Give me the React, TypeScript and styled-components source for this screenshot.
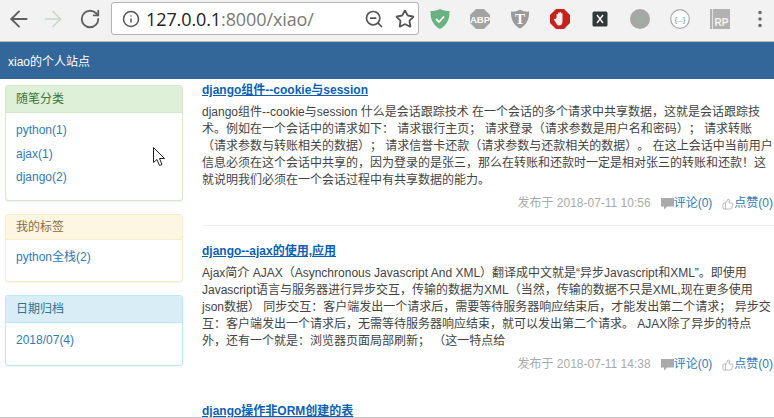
import React from "react";
import styled, { createGlobalStyle } from "styled-components";
import { ArrowLeft, ArrowRight, RotateCw, Info, ZoomOut, Star, ThumbsUp } from "lucide-react";

const GlobalStyle = createGlobalStyle`
  html, body { margin: 0; padding: 0; background: #fff; }
  body {
    font-family: "Liberation Sans", "Noto Sans CJK SC", sans-serif;
    font-size: 12px;
    color: #333;
    text-spacing-trim: space-all;
  }
`;

const panels = [
  { tone: "success", title: "随笔分类", links: ["python(1)", "ajax(1)", "django(2)"] },
  { tone: "warning", title: "我的标签", links: ["python全栈(2)"] },
  { tone: "info", title: "日期归档", links: ["2018/07(4)"] },
] as const;

const tones = {
  success: { bg: "#dff0d8", border: "#d6e9c6", text: "#3c763d", head: 26, pad: 10 },
  warning: { bg: "#fdf6e3", border: "#faebcc", text: "#8a6d3b", head: 24, pad: 12 },
  info: { bg: "#d9edf7", border: "#bce8f1", text: "#31708f", head: 26, pad: 12 },
};

const articles = [
  {
    title: "django组件--cookie与session",
    lines: [
      "django组件--cookie与session 什么是会话跟踪技术 在一个会话的多个请求中共享数据，这就是会话跟踪技",
      "术。例如在一个会话中的请求如下： 请求银行主页； 请求登录（请求参数是用户名和密码）； 请求转账",
      "（请求参数与转账相关的数据）； 请求信誉卡还款（请求参数与还款相关的数据）。 在这上会话中当前用户",
      "信息必须在这个会话中共享的，因为登录的是张三，那么在转账和还款时一定是相对张三的转账和还款！这",
      "就说明我们必须在一个会话过程中有共享数据的能力。",
    ],
    date: "2018-07-11 10:56",
    divided: true,
  },
  {
    title: "django--ajax的使用,应用",
    lines: [
      "Ajax简介 AJAX（Asynchronous Javascript And XML）翻译成中文就是“异步Javascript和XML”。即使用",
      "Javascript语言与服务器进行异步交互，传输的数据为XML（当然，传输的数据不只是XML,现在更多使用",
      "json数据） 同步交互：客户端发出一个请求后，需要等待服务器响应结束后，才能发出第二个请求； 异步交",
      "互：客户端发出一个请求后，无需等待服务器响应结束，就可以发出第二个请求。 AJAX除了异步的特点",
      "外，还有一个就是：浏览器页面局部刷新； （这一特点给",
    ],
    date: "2018-07-11 14:38",
    divided: false,
  },
];

const Page = styled.div`
  position: relative;
  height: 418px;
  box-sizing: border-box;
  overflow: hidden;
  border-bottom: 1px solid #c8c8c8;
  display: flex;
  flex-direction: column;
`;

const Toolbar = styled.div`
  height: 41px;
  flex: none;
  display: flex;
  align-items: center;
  background: #f2f2f2;
  border-bottom: 1px solid #b9b9b9;
`;

const NavIcons = styled.div`
  width: 111px;
  flex: none;
  display: flex;
  align-items: center;
  gap: 8px;
  padding-left: 6px;
  box-sizing: border-box;
  margin-top: -3px;
`;

const Reload = styled(RotateCw)`
  margin-left: 5px;
`;

const AddressBar = styled.div`
  width: 308px;
  height: 33px;
  flex: none;
  box-sizing: border-box;
  margin-top: -4px;
  background: #fff;
  border: 1px solid #b4b4b4;
  border-radius: 3px;
  display: flex;
  align-items: center;
  padding: 0 3px 0 10px;
  gap: 6px;
`;

const Url = styled.div`
  flex: 1;
  font-family: "Open Sans", sans-serif;
  font-size: 18px;
  color: #7a7a7a;
  white-space: nowrap;
  letter-spacing: -0.1px;
  & b { font-weight: 400; color: #222; }
`;

const FavStar = styled(Star)`
  margin-left: 5px;
`;

const Extensions = styled.div`
  flex: 1;
  display: flex;
  align-items: center;
  padding-left: 11px;
  gap: 20px;
  margin-top: -4px;
`;

const Ext = styled.svg`
  width: 20px;
  height: 20px;
  flex: none;
  display: block;
`;

const Navbar = styled.div`
  height: 37px;
  flex: none;
  background: #336699;
  color: #fff;
  display: flex;
  align-items: center;
  padding-left: 8px;
`;

const Content = styled.div`
  flex: 1;
  display: flex;
  gap: 19px;
  padding-left: 5px;
  min-height: 0;
`;

const Sidebar = styled.aside`
  width: 178px;
  flex: none;
  padding-top: 6px;
  display: flex;
  flex-direction: column;
  gap: 13px;
`;

const Panel = styled.div<{ $tone: keyof typeof tones }>`
  border: 1px solid ${(p) => tones[p.$tone].border};
  border-radius: 3px;
  box-shadow: 0 1px 1px rgba(0, 0, 0, 0.05);
  overflow: hidden;
  background: #fff;
`;

const PanelHeading = styled.div<{ $tone: keyof typeof tones }>`
  height: ${(p) => tones[p.$tone].head}px;
  line-height: ${(p) => tones[p.$tone].head}px;
  padding-left: 10px;
  background: ${(p) => tones[p.$tone].bg};
  color: ${(p) => tones[p.$tone].text};
  border-bottom: 1px solid ${(p) => tones[p.$tone].border};
`;

const PanelBody = styled.div<{ $tone: keyof typeof tones }>`
  padding: 6px 10px ${(p) => tones[p.$tone].pad}px;
`;

const PanelLink = styled.a`
  display: block;
  height: 23.5px;
  line-height: 23.5px;
  color: #337ab7;
`;

const Main = styled.main`
  flex: 1;
  min-width: 0;
  padding-top: 3px;
`;

const Article = styled.article<{ $divided: boolean }>`
  padding-bottom: 13px;
  margin-bottom: 17px;
  border-bottom: ${(p) => (p.$divided ? "1px solid #eeeeee" : "0")};
`;

const Title = styled.a`
  display: block;
  font-size: 12px;
  font-weight: 700;
  line-height: 17px;
  color: #0b5fb5;
  text-decoration: underline;
`;

const Excerpt = styled.div`
  margin-top: 5px;
  line-height: 17px;
  color: #444;
`;

const ExcerptLine = styled.div`
  white-space: nowrap;
`;

const Meta = styled.div`
  margin-top: 6px;
  padding-right: 1px;
  display: flex;
  align-items: center;
  justify-content: flex-end;
  line-height: 17px;
  color: #aaa;
`;

const MetaLink = styled.a`
  display: inline-flex;
  align-items: center;
  margin-left: 10px;
  color: #337ab7;
  & svg { flex: none; color: #aaa; }
`;

const Cursor = styled.svg`
  position: absolute;
  left: 153px;
  top: 147px;
  width: 13px;
  height: 20px;
`;

const CommentIcon = () => (
  <svg width="13" height="12" viewBox="0 0 13 12">
    <path d="M0 0h13v8.500H6L3 11.500V8.500H0z" fill="currentColor" />
  </svg>
);

const ExtensionIcons = () => (
  <Extensions>
    <Ext viewBox="0 0 20 20">
      <path d="M10 0c3 1.400 6 2 9.500 2 .3 8-2.500 14-9.500 18C3 16 .2 10 .5 2 4 2 7 1.400 10 0z" fill="#68b283" />
      <path d="M6 10l3 3 5-5.500" fill="none" stroke="#fff" strokeWidth="1.800" />
    </Ext>
    <Ext viewBox="0 0 20 20">
      <path d="M6 0h8l6 6v8l-6 6H6l-6-6V6z" fill="#a3a3a3" />
      <text x="10" y="13.500" textAnchor="middle" fontSize="9.500" fontWeight="700" fill="#fff" fontFamily="Liberation Sans">ABP</text>
    </Ext>
    <Ext viewBox="0 0 20 20">
      <path d="M1 2.500C5 3 8 2 10 .5c2 1.500 5 2.500 9 2 .5 7-2.500 14-9 17-6.500-3-9.500-10-9-17z" fill="#9a9a9a" />
      <text x="10" y="15" textAnchor="middle" fontSize="15" fontWeight="700" fill="#fff" fontFamily="Liberation Serif">T</text>
    </Ext>
    <Ext viewBox="0 0 20 20">
      <path d="M6 0h8l6 6v8l-6 6H6l-6-6V6z" fill="#c8201a" />
      <path d="M6.500 9V5.500a1 1 0 0 1 1.500 0V9 4a1 1 0 0 1 1.500 0v5-5.500a1 1 0 0 1 1.500 0V9 4.500a1 1 0 0 1 1.500 0V12c0 3-1.500 4.500-3.500 4.500S7 15.500 6 14l-2-3c-.5-1 .8-1.800 1.500-1z" fill="#f4f0ee" />
    </Ext>
    <Ext viewBox="0 0 20 20">
      <rect x="2.500" y="2.500" width="15" height="15" rx="1.500" fill="#2f3a38" />
      <path d="M7 6l6 8M13 6l-6 8" stroke="#fff" strokeWidth="1.300" />
    </Ext>
    <Ext viewBox="0 0 20 20">
      <circle cx="10" cy="10" r="10" fill="#a6a6a6" />
      <circle cx="10" cy="10" r="5" fill="#a2aba3" />
    </Ext>
    <Ext viewBox="0 0 20 20">
      <circle cx="10" cy="10" r="9.300" fill="#fff" stroke="#a8a8a8" strokeWidth="1.200" />
      <text x="10" y="12.500" textAnchor="middle" fontSize="7" fill="#777" fontFamily="Liberation Sans">{"{...}"}</text>
    </Ext>
    <Ext viewBox="0 0 20 20">
      <rect width="20" height="20" fill="#b2b2b2" />
      <rect x="2" width="1" height="20" fill="#e2e2e2" />
      <text x="11.500" y="17" textAnchor="middle" fontSize="10" fontWeight="700" fill="#f4f4f4" fontFamily="Liberation Sans">RP</text>
    </Ext>
    <Ext viewBox="0 0 20 20">
      <circle cx="10" cy="3.500" r="1.800" fill="#6b6b6b" />
      <circle cx="10" cy="10" r="1.800" fill="#6b6b6b" />
      <circle cx="10" cy="16.500" r="1.800" fill="#6b6b6b" />
    </Ext>
  </Extensions>
);

export default function App() {
  return (
    <Page>
      <GlobalStyle />
      <Toolbar>
        <NavIcons>
          <ArrowLeft size={26} color="#5f5f5f" strokeWidth={1.8} />
          <ArrowRight size={26} color="#c9d6c9" strokeWidth={1.4} />
          <Reload size={22} color="#5f5f5f" strokeWidth={2} />
        </NavIcons>
        <AddressBar>
          <Info size={18} color="#555" strokeWidth={2} />
          <Url>
            <b>127.0.0.1</b>:8000/xiao/
          </Url>
          <ZoomOut size={20} color="#555" strokeWidth={2} />
          <FavStar size={20} color="#555" strokeWidth={2.2} />
        </AddressBar>
        <ExtensionIcons />
      </Toolbar>
      <Navbar>xiao的个人站点</Navbar>
      <Content>
        <Sidebar>
          {panels.map((panel) => (
            <Panel key={panel.title} $tone={panel.tone}>
              <PanelHeading $tone={panel.tone}>{panel.title}</PanelHeading>
              <PanelBody $tone={panel.tone}>
                {panel.links.map((link) => (
                  <PanelLink key={link}>{link}</PanelLink>
                ))}
              </PanelBody>
            </Panel>
          ))}
        </Sidebar>
        <Main>
          {articles.map((article) => (
            <Article key={article.title} $divided={article.divided}>
              <Title>{article.title}</Title>
              <Excerpt>
                {article.lines.map((line) => (
                  <ExcerptLine key={line}>{line}</ExcerptLine>
                ))}
              </Excerpt>
              <Meta>
                发布于 {article.date}
                <MetaLink>
                  <CommentIcon />
                  评论(0)
                </MetaLink>
                <MetaLink>
                  <ThumbsUp size={12} strokeWidth={1.5} />
                  点赞(0)
                </MetaLink>
              </Meta>
            </Article>
          ))}
          <Title>django操作非ORM创建的表</Title>
        </Main>
      </Content>
      <Cursor viewBox="0 0 13 20">
        <path d="M.5.5v15l3.500-3 2.500 6 2.500-1-2.500-6h5z" fill="#fff" stroke="#222" strokeWidth="1" />
      </Cursor>
    </Page>
  );
}
